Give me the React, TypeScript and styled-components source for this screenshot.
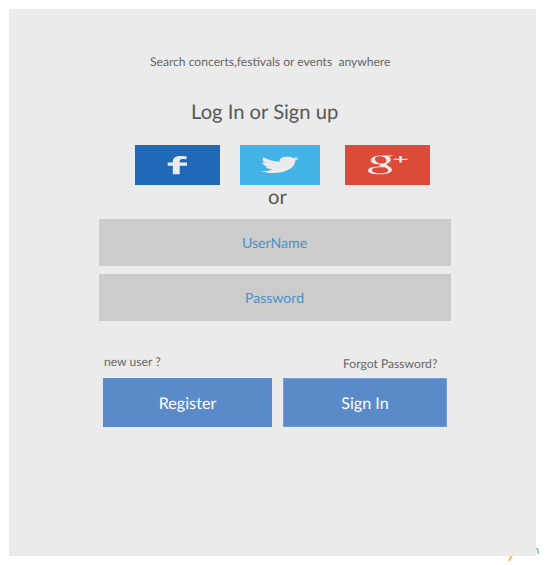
import React from "react";
import styled, { createGlobalStyle } from "styled-components";

const GlobalStyle = createGlobalStyle`
  * { box-sizing: border-box; }
  body {
    margin: 0;
    background: #fff;
    font-family: Lato, "Open Sans", sans-serif;
    text-rendering: geometricPrecision;
    overflow: hidden;
  }
`;

const Page = styled.div`
  position: relative;
  width: 545px;
  height: 565px;
  padding: 9px;
  overflow: hidden;
`;

const Panel = styled.main`
  position: relative;
  display: flex;
  flex-direction: column;
  width: 527px;
  height: 547px;
  padding: 43px 85px 0 90px;
  background: #ebebeb;
  color: #585858;
`;

const Tagline = styled.p`
  margin: 0 0 0 51px;
  height: 20px;
  line-height: 20px;
  font-size: 12.1px;
  color: #666;
  white-space: pre;
`;

const Title = styled.h1`
  margin: 25px 0 0 92px;
  height: 30px;
  line-height: 30px;
  font-size: 20.2px;
  font-weight: 400;
  white-space: nowrap;
`;

const SocialRow = styled.div`
  display: grid;
  grid-template-columns: 105px 105px 85px;
  width: 295px;
  margin: 18px 0 0 36px;
`;

const SocialButton = styled.button<{ $color: string; $width?: number }>`
  width: ${(p) => p.$width ?? 85}px;
  height: 40px;
  padding: 0;
  border: 0;
  background: ${(p) => p.$color};
  svg { display: block; }
`;

const Divider = styled.div`
  height: 24px;
  margin: 0 0 10px 169px;
  line-height: 24px;
  font-size: 20.2px;
`;

const Fields = styled.div`
  display: grid;
  gap: 8px;
`;

const Field = styled.input`
  width: 352px;
  height: 47px;
  padding: 2px 1px 0 0;
  border: 0;
  border-radius: 0;
  background: #ccc;
  font: 400 14.1px Lato, sans-serif;
  text-align: center;
  text-rendering: geometricPrecision;
  &::placeholder { color: #4a92c8; opacity: 1; }
`;

const Actions = styled.div`
  display: grid;
  grid-template-columns: 169px 164px;
  column-gap: 11px;
  margin: 31px 0 0 4px;
`;

const Hint = styled.span<{ $top: number; $left: number }>`
  height: 26px;
  padding: ${(p) => p.$top}px 0 0 ${(p) => p.$left}px;
  line-height: 18px;
  font-size: 12.15px;
  color: #666;
  white-space: nowrap;
`;

const Action = styled.button<{ $outlined?: boolean }>`
  height: 49px;
  padding: 2px 0 0;
  border: ${(p) => (p.$outlined ? "1px solid #769dd3" : "0")};
  background: #5a8ac8;
  color: #fff;
  font: 400 16.2px Lato, sans-serif;
  text-rendering: geometricPrecision;
`;

const Slash = styled.svg`
  position: absolute;
  left: 507px;
  top: 555px;
`;

const Stray = styled.span`
  position: absolute;
  left: 533px;
  top: 544px;
  font-size: 11px;
  line-height: 13px;
  color: #888;
`;

const FacebookLogo = () => (
  <svg width="85" height="40" fill="#ebebeb">
    <path d="M37.8 29.3V20.7H32.7V17.6H37.8V16.5C37.8 12.6 41 11 46.3 11C48.6 11 50.5 11.2 52 11.5L51 14.4C49.8 14.1 48.8 14 47.7 14C45.6 14 44.7 14.7 44.7 16.2V17.6H52V20.7H44.7V29.3Z" />
  </svg>
);

const TwitterLogo = () => (
  <svg width="80" height="40" fill="#ebebeb">
    <svg x="21" y="11.6" width="38" height="16.4" viewBox="0 48 512 416" preserveAspectRatio="none">
      <path d="M459.4 151.7c.3 4.5.3 9.1.3 13.6 0 138.7-105.6 298.6-298.6 298.6-59.5 0-114.7-17.2-161.1-47.1 8.4 1 16.6 1.3 25.3 1.3 49.1 0 94.2-16.6 130.3-44.8-46.1-1-84.8-31.2-98.1-72.8 6.5 1 13 1.6 19.8 1.6 9.4 0 18.8-1.3 27.6-3.6-48.1-9.7-84.1-52-84.1-103v-1.3c14 7.8 30.2 12.7 47.4 13.3-28.3-18.8-46.8-51-46.8-87.4 0-19.5 5.2-37.4 14.3-53 51.7 63.7 129.3 105.3 216.4 109.8-1.6-7.8-2.6-15.9-2.6-24 0-57.8 46.8-104.9 104.9-104.9 30.2 0 57.5 12.7 76.7 33.1 23.7-4.5 46.5-13.3 66.6-25.3-7.8 24.4-24.4 44.8-46.1 57.8 21.1-2.3 41.6-8.1 60.4-16.2-14.3 20.8-32.2 39.3-52.6 54.3z" />
    </svg>
  </svg>
);

const GoogleLogo = () => (
  <svg width="85" height="40" fill="#ebebeb">
    <path
      fillRule="evenodd"
      d="M36.5 10.5H48.3L45.7 11.6H42.7C44.7 12.3 45.8 13.4 45.8 14.8C45.8 16.3 44.8 17.2 43.3 18C41.7 18.8 41.5 19.1 41.5 19.6C41.5 20.1 42.6 20.7 44 21.4C46.1 22.4 46.9 23.4 46.9 24.8C46.9 27.2 43.3 29.3 34.1 29.3C27.2 29.3 23 27.9 23 25.6C23 22.9 27.7 21.4 35.7 21.2C34.8 20.7 34.3 20.2 34.6 19.3C29.3 19.4 25.7 17.7 25.7 15.2C25.7 12.6 30.4 10.5 36.5 10.5ZM34.5 11.2C31.6 11.2 29.8 12.3 30 14.3C30.3 16.8 33.3 18.5 37 18.5C40.3 18.5 41.8 17.1 41.5 15.2C41.1 12.8 38.3 11.2 34.5 11.2ZM35.8 22.2C30.2 22.2 26.8 23.4 26.8 25.2C26.8 27 30.5 28.2 35.5 28.2C40.8 28.2 43.2 27.1 43.2 25.3C43.2 23.6 40.7 22.3 38.8 22.2Z"
    />
    <path d="M54.2 11H56.8V13.7H62.4V14.9H56.8V17.6H54.2V14.9H48.7V13.7H54.2Z" />
  </svg>
);

export default function App() {
  return (
    <>
      <GlobalStyle />
      <Page>
        <Stray>n</Stray>
        <Slash width="7" height="7">
          <path d="M5 0L2 6" stroke="#fdb863" strokeWidth="2" />
        </Slash>
        <Panel>
          <Tagline>{"Search concerts,festivals or events  anywhere"}</Tagline>
          <Title>Log In or Sign up</Title>
          <SocialRow>
            <SocialButton $color="#1f69b6" aria-label="Facebook"><FacebookLogo /></SocialButton>
            <SocialButton $color="#43b2e6" $width={80} aria-label="Twitter"><TwitterLogo /></SocialButton>
            <SocialButton $color="#dc4a38" aria-label="Google Plus"><GoogleLogo /></SocialButton>
          </SocialRow>
          <Divider>or</Divider>
          <Fields>
            <Field placeholder="UserName" />
            <Field type="password" placeholder="Password" />
          </Fields>
          <Actions>
            <Hint $top={1} $left={1}>new user ?</Hint>
            <Hint $top={3} $left={60}>Forgot Password?</Hint>
            <Action>Register</Action>
            <Action $outlined>Sign In</Action>
          </Actions>
        </Panel>
      </Page>
    </>
  );
}
